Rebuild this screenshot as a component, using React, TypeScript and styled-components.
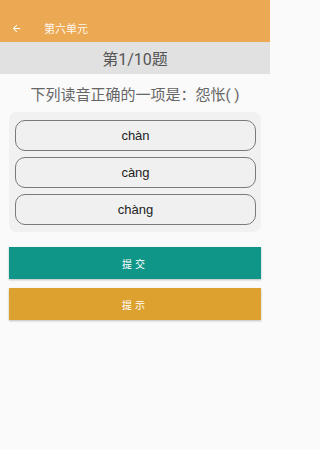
import React from 'react'
import styled, { createGlobalStyle } from 'styled-components'

const GlobalStyle = createGlobalStyle`
  html, body {
    margin: 0;
    padding: 0;
    background: #fafafa;
    font-family: Roboto, 'Noto Sans CJK SC', sans-serif;
  }
`

const Page = styled.div`
  width: 270px;
  min-height: 450px;
  background: #fafafa;
  display: flex;
  flex-direction: column;
`

const Toolbar = styled.div`
  height: 42px;
  background: #eca954;
  display: flex;
  align-items: center;
  padding: 14px 0 0 11px;
  box-sizing: border-box;
  color: #fff;

  & .title {
    margin-left: 22px;
    font-size: 11px;
    color: rgba(255, 255, 255, 0.92);
  }
`

const Counter = styled.div`
  height: 32px;
  background: #e1e1e1;
  display: flex;
  align-items: center;
  justify-content: center;
  font-size: 16px;
  color: #555;
`

const Question = styled.div`
  height: 38px;
  display: flex;
  align-items: center;
  justify-content: center;
  font-size: 15px;
  color: #666;
`

const Options = styled.div`
  margin: 0 9px;
  padding: 8px 5px 7px 6px;
  background: #f1f1f1;
  border-radius: 8px;
  display: flex;
  flex-direction: column;
  gap: 6px;
`

const Option = styled.div`
  height: 31px;
  box-sizing: border-box;
  border: 1px solid #7a7a7a;
  border-radius: 10px;
  background: #f0f0f0;
  display: flex;
  align-items: center;
  justify-content: center;
  font-family: 'Liberation Sans', Arial, sans-serif;
  font-size: 13px;
  color: #222;
`

const Actions = styled.div`
  margin: 15px 9px 0;
  display: flex;
  flex-direction: column;
  gap: 9px;
`

const ActionButton = styled.div<{ $color: string }>`
  height: 32px;
  background: ${props => props.$color};
  box-shadow: 0 1px 2px rgba(0, 0, 0, 0.25);
  display: flex;
  align-items: center;
  justify-content: center;
  color: #fff;
  font-size: 10px;
  letter-spacing: 3px;
`

function BackArrow() {
  return (
    <svg width="11" height="11" viewBox="0 0 24 24">
      <path
        d="M20 11H7.83l5.59-5.59L12 4l-8 8 8 8 1.41-1.41L7.83 13H20v-2z"
        fill="#fff"
      />
    </svg>
  )
}

function App() {
  const options = ['chàn', 'càng', 'chàng']
  return (
    <Page>
      <GlobalStyle />
      <Toolbar>
        <BackArrow />
        <span className={'title'}>{'第六单元'}</span>
      </Toolbar>
      <Counter>{'第1/10题'}</Counter>
      <Question>{'下列读音正确的一项是：怨怅( )'}</Question>
      <Options>
        {options.map(o => (
          <Option key={o}>{o}</Option>
        ))}
      </Options>
      <Actions>
        <ActionButton $color={'#0f9688'}>{'提交'}</ActionButton>
        <ActionButton $color={'#dda12f'}>{'提示'}</ActionButton>
      </Actions>
    </Page>
  )
}

export default App
